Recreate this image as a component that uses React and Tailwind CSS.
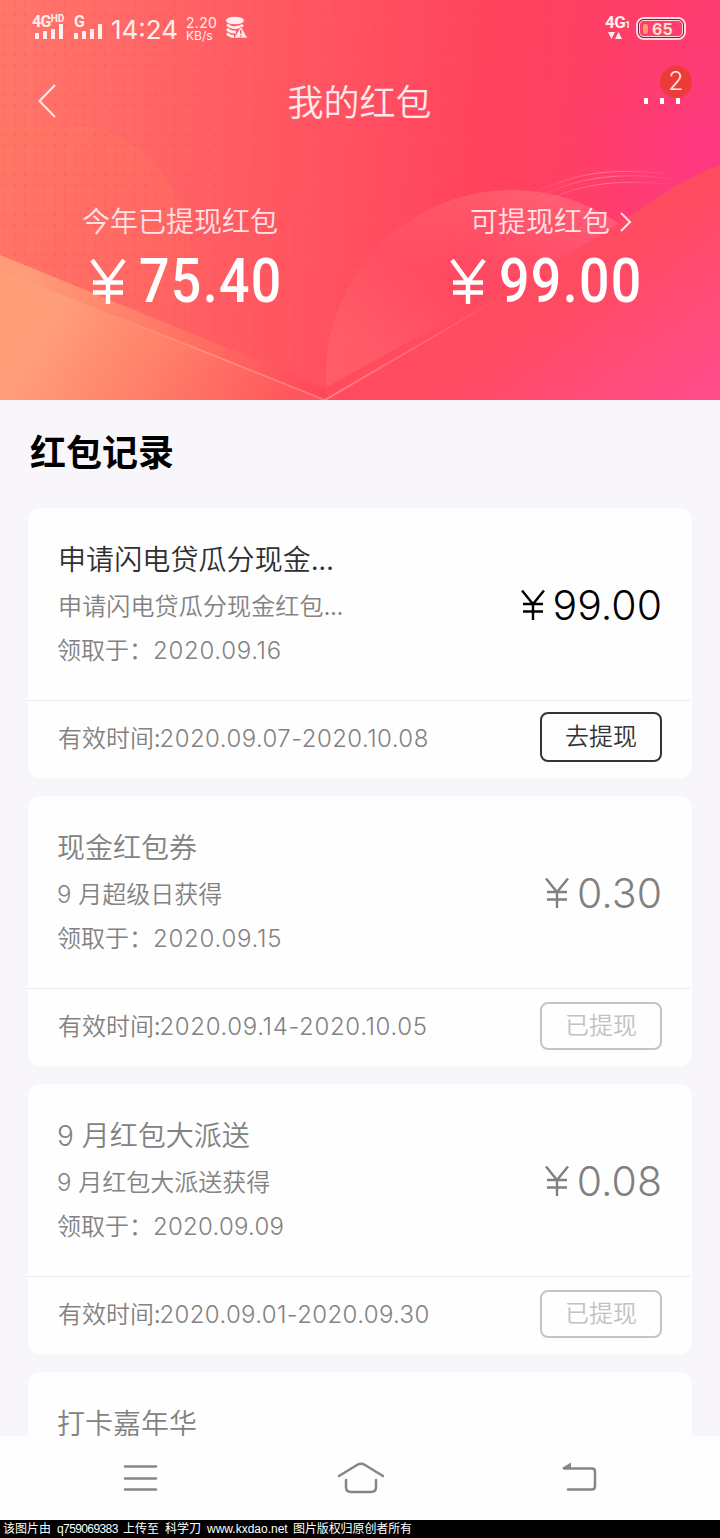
import React from 'react';

const records = [
  {
    title: '申请闪电贷瓜分现金...',
    desc: '申请闪电贷瓜分现金红包...',
    date: '2020.09.16',
    dateClass: 'tracking-[0.7px]',
    amount: '99.00',
    range: '2020.09.07-2020.10.08',
    rangeClass: 'tracking-[0.45px]',
    active: true,
  },
  {
    title: '现金红包券',
    desc: '9 月超级日获得',
    date: '2020.09.15',
    dateClass: 'tracking-[0.75px]',
    amount: '0.30',
    range: '2020.09.14-2020.10.05',
    rangeClass: 'tracking-[0.64px]',
  },
  {
    title: '9 月红包大派送',
    desc: '9 月红包大派送获得',
    date: '2020.09.09',
    dateClass: 'tracking-[0.25px]',
    amount: '0.08',
    range: '2020.09.01-2020.09.30',
    rangeClass: 'tracking-[0.36px]',
  },
  { title: '打卡嘉年华', desc: '', date: '', amount: '', range: '' },
];

function HeaderArt() {
  return (
    <svg className="absolute inset-0" width="720" height="400" viewBox="0 0 720 400" fill="none">
      <defs>
        <linearGradient id="base" gradientUnits="userSpaceOnUse" x1="0" y1="70" x2="700" y2="130">
          <stop offset="0" stopColor="#ff776a" />
          <stop offset="0.3" stopColor="#ff5f64" />
          <stop offset="0.7" stopColor="#ff435d" />
          <stop offset="0.86" stopColor="#ff3f66" />
          <stop offset="1" stopColor="#ff3d72" />
        </linearGradient>
        <radialGradient id="pink" gradientUnits="userSpaceOnUse" cx="715" cy="165" r="170">
          <stop offset="0" stopColor="#ff368a" stopOpacity="0.75" />
          <stop offset="0.5" stopColor="#ff3888" stopOpacity="0.3" />
          <stop offset="1" stopColor="#ff3a80" stopOpacity="0" />
        </radialGradient>
        <linearGradient id="glow" gradientUnits="userSpaceOnUse" x1="130" y1="130" x2="90" y2="290">
          <stop offset="0" stopColor="#ff7d5c" stopOpacity="0.3" />
          <stop offset="1" stopColor="#ff7058" stopOpacity="0.15" />
        </linearGradient>
        <linearGradient id="left" gradientUnits="userSpaceOnUse" x1="45" y1="320" x2="265" y2="450">
          <stop offset="0" stopColor="#ff9f7a" />
          <stop offset="0.5" stopColor="#ff7d68" />
          <stop offset="1" stopColor="#ff555c" />
        </linearGradient>
        <linearGradient id="leftEdge" gradientUnits="userSpaceOnUse" x1="30" y1="270" x2="325" y2="390">
          <stop offset="0" stopColor="#ff9c78" />
          <stop offset="0.6" stopColor="#ff6d61" />
          <stop offset="1" stopColor="#ff465b" />
        </linearGradient>
        <linearGradient id="right" gradientUnits="userSpaceOnUse" x1="480" y1="250" x2="650" y2="480">
          <stop offset="0" stopColor="#ff4c5b" />
          <stop offset="0.3" stopColor="#ff4b61" />
          <stop offset="1" stopColor="#ff4d93" />
        </linearGradient>
        <linearGradient id="disc" gradientUnits="userSpaceOnUse" x1="510" y1="190" x2="440" y2="370">
          <stop offset="0" stopColor="#ff9a90" stopOpacity="0.3" />
          <stop offset="0.55" stopColor="#ff6678" stopOpacity="0.12" />
          <stop offset="1" stopColor="#ff8080" stopOpacity="0.26" />
        </linearGradient>
        <linearGradient id="rayL" gradientUnits="userSpaceOnUse" x1="90" y1="306" x2="325" y2="400">
          <stop offset="0" stopColor="#ffb5a0" stopOpacity="0" />
          <stop offset="0.5" stopColor="#ffb5a0" stopOpacity="0.5" />
          <stop offset="1" stopColor="#ffa09a" stopOpacity="0.5" />
        </linearGradient>
        <linearGradient id="rayR" gradientUnits="userSpaceOnUse" x1="325" y1="400" x2="510" y2="292">
          <stop offset="0" stopColor="#ff9a9a" stopOpacity="0.75" />
          <stop offset="1" stopColor="#ff9a9a" stopOpacity="0" />
        </linearGradient>
        <linearGradient id="arc" gradientUnits="userSpaceOnUse" x1="525" y1="0" x2="680" y2="0">
          <stop offset="0" stopColor="#ffb0c0" stopOpacity="0" />
          <stop offset="0.5" stopColor="#ffb0c0" stopOpacity="0.5" />
          <stop offset="1" stopColor="#ffb0c0" stopOpacity="0" />
        </linearGradient>
        <pattern id="dots" width="10" height="10" patternUnits="userSpaceOnUse">
          <path d="M5 0V10M0 5H10" stroke="#e8304e" strokeOpacity="0.03" />
          <rect x="4" y="4" width="2" height="2" fill="#e8304e" fillOpacity="0.16" />
        </pattern>
      </defs>
      <path d="M0 0H720V400H0Z" fill="url(#base)" />
      <path d="M0 0H720V400H0Z" fill="url(#pink)" />
      <path d="M0 132C60 115 115 125 150 158C176 183 190 220 190 270V334L0 256Z" fill="url(#glow)" />
      <path d="M0 0H720V400H0Z" fill="url(#dots)" />
      <circle cx="512" cy="376" r="186" fill="url(#disc)" />
      <path d="M520 201C570 171 615 167 675 175M530 202C575 175 625 172 672 179M545 202C580 182 625 180 664 184" stroke="url(#arc)" />
      <path d="M325 388L592 240C640 212 672 182 720 165V400H325Z" fill="url(#right)" />
      <path d="M0 255L325 388V400H0Z" fill="url(#leftEdge)" />
      <path d="M0 270L325 400H0Z" fill="url(#left)" />
      <path d="M90 306L325 400" stroke="url(#rayL)" strokeWidth="1.6" />
      <path d="M325 400L510 292" stroke="url(#rayR)" strokeWidth="1.6" />
    </svg>
  );
}

function StatusBar() {
  return (
    <div className="flex h-14 items-start pl-8 pr-[33px] pt-[13px] text-[#ffeef0]">
      <div className="w-[42px]">
        <div className="flex h-3 items-start font-['Roboto'] text-[16px] font-bold leading-[18px] tracking-[-0.7px]">
          4G<span className="text-[10px] leading-[11px] tracking-normal">HD</span>
        </div>
        <svg width="34" height="16" viewBox="0 0 34 16" fill="currentColor" className="-mt-px">
          <path d="M3 9h4v6h-4zM11 7h4v8h-4zM19 5h4v10h-4zM27 0h4v15h-4z" />
        </svg>
      </div>
      <div className="w-[37px]">
        <div className="h-3 font-['Roboto'] text-[16px] font-bold leading-[18px]">G</div>
        <svg width="34" height="16" viewBox="0 0 34 16" fill="currentColor" className="-mt-px">
          <path d="M0 9h4v6h-4zM8 7h4v8h-4zM16 5h4v10h-4zM24 0h4v15h-4z" />
        </svg>
      </div>
      <div className="w-[75px] font-['Inter'] text-[26px] leading-[33px]">14:24</div>
      <div className="w-10 pt-[3px] font-['Inter']">
        <div className="text-[14px] leading-[13px] tracking-[0.3px]">2.20</div>
        <div className="text-[12px] leading-[13px]">KB/s</div>
      </div>
      <svg width="22" height="24" viewBox="0 0 22 24" fill="none" className="mt-[3px]">
        <ellipse cx="9" cy="4.5" rx="9" ry="3.8" fill="currentColor" />
        <path d="M1 8.5Q5 12 10 11.5Q15 11 17 9M1 13Q4 16.5 10 16M1 17.5Q4 20.5 8 20.5" stroke="currentColor" strokeWidth="2.8" />
        <path d="M15 10.5L21.5 22H8Z" fill="currentColor" stroke="#ff5862" strokeWidth="0.6" />
        <path d="M14.8 14v4M14.8 19.2v1.5" stroke="#ff5862" strokeWidth="1.5" />
      </svg>
      <div className="ml-auto w-[31px] font-['Roboto'] text-[17px] font-bold leading-[20px] tracking-[-0.6px]">
        <div className="-ml-px flex h-[19px] items-end">4G<span className="text-[9px] leading-[14px]">1</span></div>
        <svg width="20" height="8" viewBox="0 0 20 8" fill="currentColor"><path d="M2 0h7L5.500 7zM9 7h7L12.500 0z" /></svg>
      </div>
      <div className="-ml-px mr-px mt-[4px] flex h-[23px] w-[50px] items-center rounded-[8px] border-2 border-[#ffd9dd]">
        <div className="flex h-full w-full items-center rounded-[6px] border border-[#6b2a45]">
          <div className="flex h-full w-full items-center rounded-[5px] border border-[#ffd9dd] pl-[3px] font-['Inter'] text-[16px] font-bold leading-none text-[#ffe5c8]">
            <span className="mr-[4px] h-[10px] w-[5px] rounded-[2px] bg-[#ff9c68]" />65
          </div>
        </div>
      </div>
    </div>
  );
}

function Balance({ label, amount, arrow }) {
  return (
    <div className="w-[360px]">
      <div className={arrow ? 'flex h-10 items-center pl-[110px] text-[28px] font-[350] leading-10 text-[#ffe3e8]' : 'flex h-10 items-center pl-[82px] text-[28px] font-[350] leading-10 text-[#ffe3e8]'}>
        {label}
        {arrow && (
          <svg width="14" height="20" viewBox="0 0 14 20" fill="none" className="ml-[9px] mt-[4px]">
            <path d="M2 1L11 10L2 19" stroke="currentColor" strokeWidth="2" />
          </svg>
        )}
      </div>
      <div className="flex h-[80px] items-center pl-[90px] text-white">
        <svg width="36" height="46" viewBox="0 0 36 46" fill="none" className="mt-[3px]">
          <path d="M2 1L18 23L34 1M18 23V45M3 23.500H33M3 33.500H33" stroke="currentColor" strokeWidth="4.400" />
        </svg>
        <span className="ml-[13px] mt-[2px] inline-block origin-left scale-x-[0.88] font-['Roboto'] text-[61px] font-medium leading-[80px] tracking-[1.5px]">{amount}</span>
      </div>
    </div>
  );
}

function Yen() {
  return (
    <svg width="26" height="30" viewBox="0 0 26 30" fill="none" className="mb-[1px]">
      <path d="M2 .5L13 14L24 .5M13 14V30M3 14H23M3 21.500H23" stroke="currentColor" strokeWidth="2.400" />
    </svg>
  );
}

function Card({ r }) {
  return (
    <div className="h-[270px] w-[664px] shrink-0 rounded-[12px] bg-[#fefefe] text-[#828282]">
      <div className="flex h-[192px] justify-between pl-[30px] pr-[30px]">
        <div className="whitespace-nowrap pt-[30px] font-[350]">
          <div className={r.active ? 'h-[45px] text-[28px] leading-10 tracking-[0.1px] text-[#303030]' : "-ml-px h-[45px] font-['Inter','Noto_Sans_CJK_SC',sans-serif] text-[28px] leading-[45px]"}>{r.title}</div>
          {r.desc && (
            <div className={r.active ? 'h-11 text-[24px] leading-[44px] tracking-[0.15px]' : "-ml-px h-11 font-['Inter','Noto_Sans_CJK_SC',sans-serif] text-[24px] leading-[48px]"}>{r.desc}</div>
          )}
          {r.date && (
            <div className="-ml-px flex h-11 text-[24px] leading-[44px]">
              <span className="w-24">领取于：</span>
              <span className="font-['Inter'] font-light leading-[47px]">
                <span className={r.dateClass}>{r.date}</span>
              </span>
            </div>
          )}
        </div>
        {r.amount && (
          <div className={r.active ? 'flex h-[194px] items-center text-black' : 'flex h-[194px] items-center text-[#808080]'}>
            <Yen />
            <span className="ml-[7px] font-['Inter'] text-[41px] font-light leading-none">{r.amount}</span>
          </div>
        )}
      </div>
      {r.range && (
        <div className="mr-[2px] flex h-[76px] items-center justify-between border-t border-[#e9e9eb] pl-[30px] pr-[28px]">
          <span className="-mt-px flex text-[24px] font-[350] leading-[37px]">
            有效时间:
            <span className="-ml-px font-['Inter'] font-light leading-[41px]">
              <span className={r.rangeClass}>{r.range}</span>
            </span>
          </span>
          <span className={r.active ? '-mt-[4px] flex h-[50px] w-[122px] items-center justify-center rounded-[8px] border-2 border-[#333] pb-[3px] text-[24px] font-[350] text-[#333]' : '-mt-px flex h-[48px] w-[122px] items-center justify-center rounded-[8px] border-2 border-[#c4c4c4] pb-[5px] text-[24px] font-[350] text-[#c2c2c2]'}>
            {r.active ? '去提现' : '已提现'}
          </span>
        </div>
      )}
    </div>
  );
}

export default function App() {
  return (
    <div className="flex h-[1538px] w-[720px] flex-col overflow-hidden bg-[#f8f6fa] font-['Noto_Sans_CJK_SC',sans-serif]">
      <header className="relative h-[400px] shrink-0">
        <HeaderArt />
        <div className="relative">
          <StatusBar />
          <div className="flex h-[90px] items-center justify-between pl-[37px] pr-[38px] text-[#ffe9ec]">
            <svg width="40" height="34" viewBox="0 0 40 34" fill="none">
              <path d="M18 1L2.500 17L18 33" stroke="currentColor" strokeWidth="2" />
            </svg>
            <h1 className="-mt-[2px] text-[36px] font-[350] leading-[52px]">我的红包</h1>
            <div className="relative flex w-10 gap-3 pl-[2px]">
              <i className="h-[6px] w-1 bg-white" />
              <i className="h-[6px] w-1 bg-white" />
              <i className="h-[6px] w-1 bg-white" />
              <span className="absolute -top-[32px] left-[18px] flex h-8 w-8 items-center justify-center rounded-full bg-[#ec3b38] font-['Inter'] text-[25px] font-light text-[#ffe8e8]">2</span>
            </div>
          </div>
          <div className="flex pt-[54px]">
            <Balance label="今年已提现红包" amount="75.40" />
            <Balance label="可提现红包" amount="99.00" arrow />
          </div>
        </div>
      </header>
      <main className="flex h-[1036px] shrink-0 flex-col overflow-hidden">
        <h2 className="h-[108px] shrink-0 pl-[30px] text-[36px] font-bold leading-[100px] text-black">红包记录</h2>
        <div className="flex flex-col gap-[18px] pl-7">
          {records.map((r) => (
            <Card key={r.title} r={r} />
          ))}
        </div>
      </main>
      <nav className="flex h-[84px] shrink-0 items-center justify-between bg-[#fefefe] pl-[122px] pr-[122px] text-[#868686]">
        <svg width="36" height="36" viewBox="0 0 36 36" stroke="currentColor" strokeWidth="2.500" strokeLinecap="round" fill="none">
          <path d="M3 6.500H34M3 18.500H34M3 29.500H34" />
        </svg>
        <svg width="50" height="36" viewBox="0 0 50 36" stroke="currentColor" strokeWidth="2.500" strokeLinecap="round" fill="none" className="ml-[3px]">
          <path d="M3 16L21 5Q25 2.500 29 5L47 16M10 20V27Q10 32 15 32H35Q40 32 40 27V20" />
        </svg>
        <svg width="38" height="36" viewBox="0 0 38 36" stroke="currentColor" strokeWidth="2.500" strokeLinecap="round" fill="none">
          <path d="M4 8.500H32Q35 8.500 35 11.500V26Q35 29.500 32 29.500H8" />
          <path d="M2 8L11 2.500V8.500Z" fill="currentColor" stroke="none" />
        </svg>
      </nav>
      <footer className="flex h-[18px] shrink-0 items-center whitespace-pre bg-black pl-[3px] font-['Liberation_Sans','Noto_Sans_CJK_SC',sans-serif] text-[12px] leading-[18px] text-white">
        <span className="w-[54px]">该图片由</span>
        <span className="w-[66px] tracking-[-0.6px]">q759069383</span>
        <span className="w-[42px]">上传至</span>
        <span className="w-[42px]">科学刀</span>
        <span className="w-[86px]">www.kxdao.net</span>
        <span className="tracking-[-0.1px]">图片版权归原创者所有</span>
      </footer>
    </div>
  );
}
